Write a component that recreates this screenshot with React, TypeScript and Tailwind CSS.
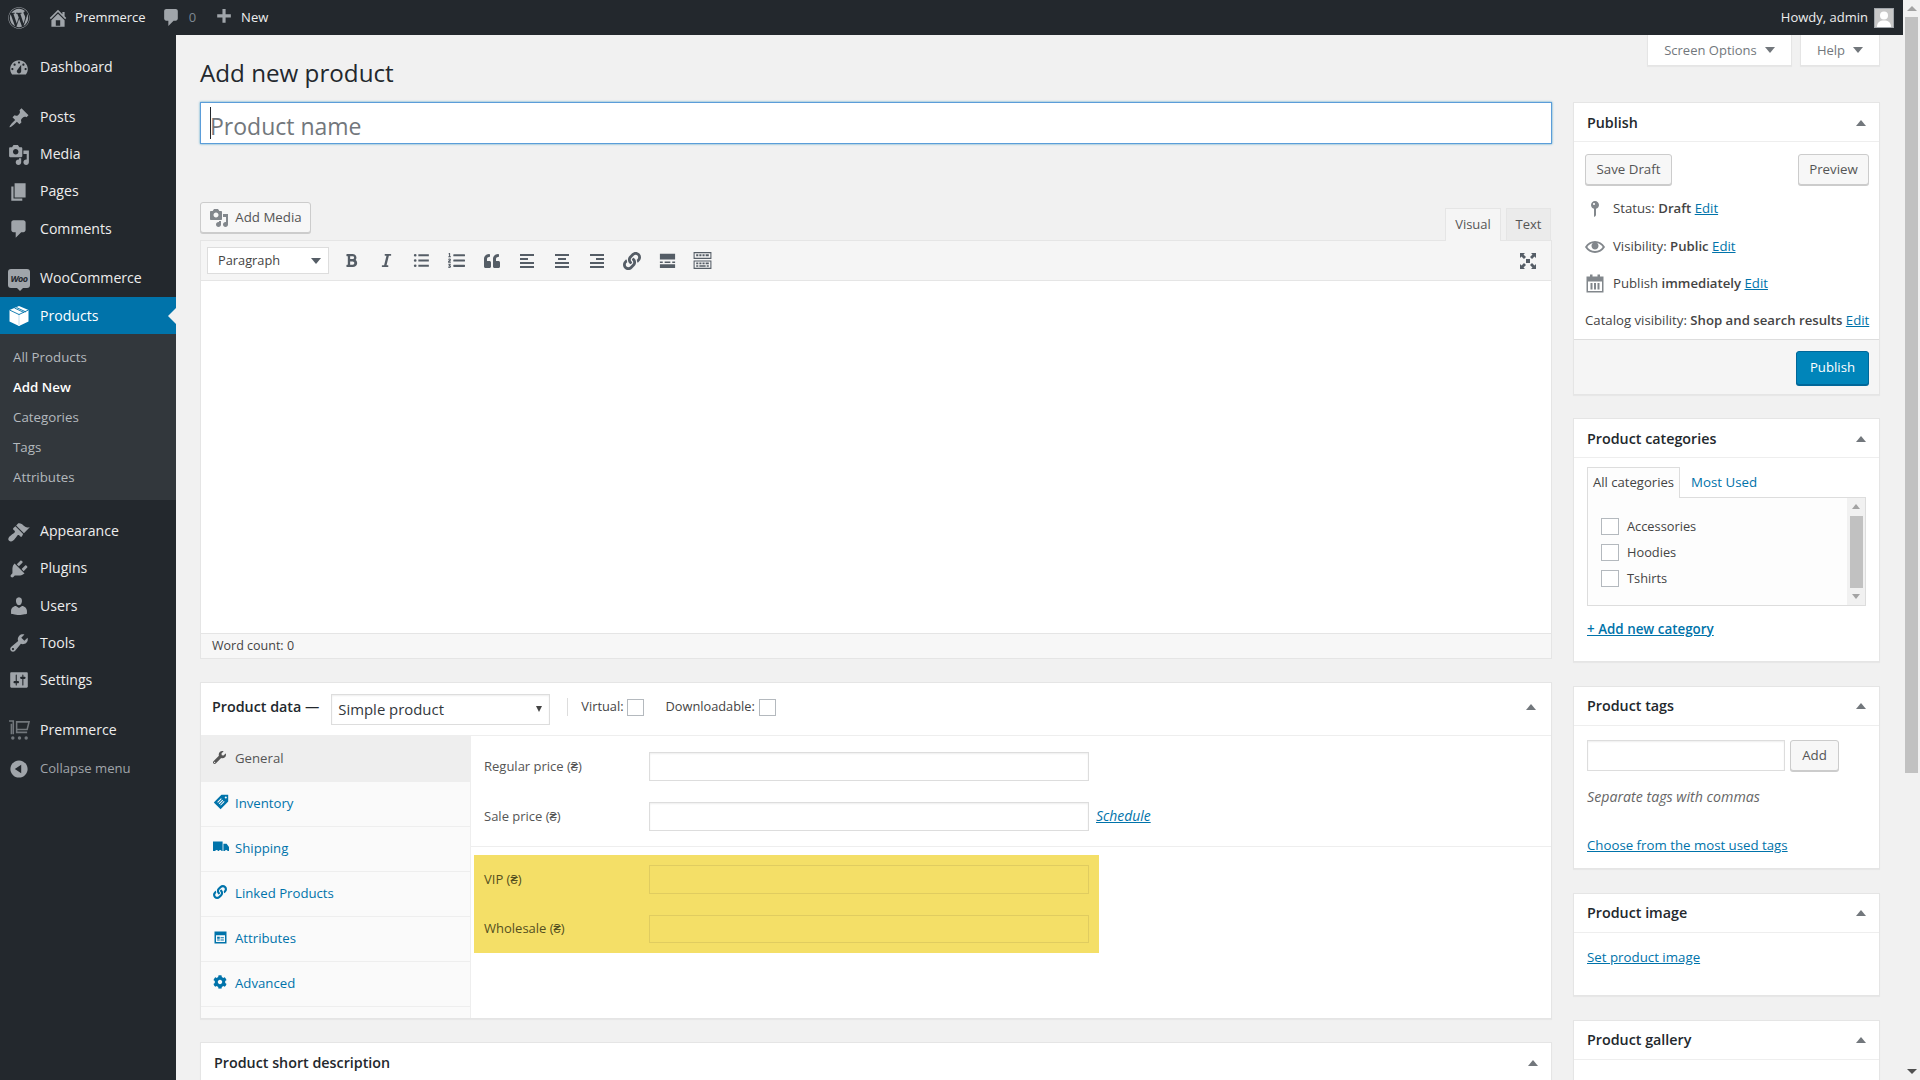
import React from "react";
import { FaWordpress, FaBold, FaItalic, FaListOl, FaQuoteLeft, FaLink, FaCog, FaWrench } from "react-icons/fa";

const P: Record<string, string> = {
  home: "M16 8.5l1.53 1.53-1.06 1.06L10 4.62l-6.47 6.47-1.06-1.06L10 2.5l4 4v-2h2v4zm-6-2.46l6 5.99V18H4v-5.97zM12 17v-5H8v5h4z",
  comment: "M5 2h9c1.1 0 2 .9 2 2v7c0 1.1-.9 2-2 2h-2l-5 5v-5H5c-1.1 0-2-.9-2-2V4c0-1.1.9-2 2-2z",
  plus: "M17 7v3h-5v5H9v-5H4V7h5V2h3v5h5z",
  dashboard: "M3.76 16h12.48c1.1-1.37 1.76-3.11 1.76-5 0-4.42-3.58-8-8-8s-8 3.58-8 8c0 1.89.66 3.63 1.76 5zM10 4c.55 0 1 .45 1 1s-.45 1-1 1-1-.45-1-1 .45-1 1-1zM6 6c.55 0 1 .45 1 1s-.45 1-1 1-1-.45-1-1 .45-1 1-1zm8 0c.55 0 1 .45 1 1s-.45 1-1 1-1-.45-1-1 .45-1 1-1zm-5.37 5.55L12 7v6c0 1.1-.9 2-2 2s-2-.9-2-2c0-.57.24-1.08.63-1.45zM4 10c.55 0 1 .45 1 1s-.45 1-1 1-1-.45-1-1 .45-1 1-1zm12 0c.55 0 1 .45 1 1s-.45 1-1 1-1-.45-1-1 .45-1 1-1z",
  post: "M10.44 3.02l1.82-1.82 6.36 6.35-1.83 1.82c-1.05-.68-2.48-.57-3.41.36l-.75.75c-.92.93-1.04 2.35-.35 3.41l-1.83 1.82-2.41-2.41-2.8 2.79c-.42.42-3.38 2.71-3.8 2.29s1.86-3.39 2.28-3.81l2.79-2.79L4.1 9.36l1.83-1.82c1.05.69 2.48.57 3.4-.36l.75-.75c.93-.92 1.05-2.35.36-3.41z",
  media: "M13 11V4c0-.55-.45-1-1-1h-1.67L9 1H5L3.67 3H2c-.55 0-1 .45-1 1v7c0 .55.45 1 1 1h10c.55 0 1-.45 1-1zM7 4.5c1.38 0 2.5 1.12 2.5 2.5S8.38 9.5 7 9.5 4.5 8.38 4.5 7 5.62 4.5 7 4.5zM14 6h5v10.5c0 1.38-1.12 2.5-2.5 2.5S14 17.88 14 16.5s1.12-2.5 2.5-2.5c.17 0 .34.02.5.05V9h-3V6zm-4 8.05V13h2v3.5c0 1.38-1.12 2.5-2.5 2.5S7 17.88 7 16.5 8.12 14 9.5 14c.17 0 .34.02.5.05z",
  page: "M6 15V2h10v13H6zm-1 1h8v2H3V5h2v11z",
  appearance: "M14.48 11.06L7.41 3.99l1.5-1.5c.5-.56 2.3-.47 3.51.32 1.21.8 1.43 1.28 2.91 2.1 1.18.64 2.45 1.26 4.45.85zm-.71.71L6.7 4.7 4.93 6.47c-.39.39-.39 1.02 0 1.41l1.06 1.06c.39.39.39 1.03 0 1.42-.6.6-1.43 1.11-2.21 1.69-.35.26-.7.53-1.01.84C1.43 13.71-.96 16.07.97 18c1.94 1.93 4.3-.45 5.28-1.8.23-.3.5-.65.79-.99.58-.78 1.09-1.61 1.69-2.21.39-.39 1.03-.39 1.42 0l1.06 1.06c.39.39 1.02.39 1.41 0z",
  plugins: "M13.11 4.36L9.87 7.6 8 5.73l3.24-3.24c.35-.34 1.05-.2 1.56.32.52.51.66 1.21.31 1.55zm-8 1.77l.91-1.12 9.01 9.01-1.19.84c-.71.71-2.63 1.16-3.82 1.16H6.14L4.9 17.26c-.59.59-1.54.59-2.12 0-.59-.58-.59-1.53 0-2.12l1.24-1.24v-3.88c0-1.13.4-3.19 1.09-3.89zm7.26 3.97l3.24-3.24c.34-.35 1.04-.21 1.55.31.52.51.66 1.21.31 1.55l-3.24 3.25z",
  users: "M10 9.25c-2.27 0-2.73-3.44-2.73-3.44C7 4.02 7.82 2 9.97 2c2.16 0 2.98 2.02 2.71 3.81 0 0-.41 3.44-2.68 3.44zm0 2.57L12.72 10c2.39 0 4.52 2.33 4.52 4.53v2.49s-3.65 1.13-7.24 1.13c-3.65 0-7.24-1.13-7.24-1.13v-2.49c0-2.25 1.94-4.48 4.47-4.48z",
  tools: "M16.68 9.77c-1.34 1.34-3.3 1.67-4.95.99l-5.41 6.52c-.99.99-2.59.99-3.58 0s-.99-2.59 0-3.57l6.52-5.42c-.68-1.65-.35-3.61.99-4.95 1.28-1.28 3.12-1.62 4.72-1.06l-2.89 2.89 2.82 2.82 2.86-2.87c.53 1.58.18 3.39-1.08 4.65zM3.81 16.21c.4.39 1.04.39 1.43 0 .4-.4.4-1.04 0-1.43-.39-.4-1.03-.4-1.43 0-.39.39-.39 1.03 0 1.43z",
  settings: "M18 16V4c0-.55-.45-1-1-1H3c-.55 0-1 .45-1 1v12c0 .55.45 1 1 1h14c.55 0 1-.45 1-1zM8 11h1c.55 0 1 .45 1 1s-.45 1-1 1H8v1.5c0 .28-.22.5-.5.5s-.5-.22-.5-.5V13H6c-.55 0-1-.45-1-1s.45-1 1-1h1V5.5c0-.28.22-.5.5-.5s.5.22.5.5V11zm5-2h-1c-.55 0-1-.45-1-1s.45-1 1-1h1V5.5c0-.28.22-.5.5-.5s.5.22.5.5V7h1c.55 0 1 .45 1 1s-.45 1-1 1h-1v5.5c0 .28-.22.5-.5.5s-.5-.22-.5-.5V9z",
  collapse: "M10 2.16c4.33 0 7.84 3.51 7.84 7.84s-3.51 7.84-7.84 7.84S2.16 14.33 2.16 10 5.71 2.16 10 2.16zm2 11.72V6.12L6.18 9.97z",
  pin: "M14 6c0 1.86-1.28 3.41-3 3.86V16c0 1-2 2-2 2V9.86c-1.72-.45-3-2-3-3.86 0-2.21 1.79-4 4-4s4 1.79 4 4zM8 5c0 .55.45 1 1 1s1-.45 1-1-.45-1-1-1-1 .45-1 1z",
  eye: "M19.7 9.4C17.7 6 14 3.9 10 3.9S2.3 6 .3 9.4L0 10l.3.6c2 3.4 5.7 5.5 9.7 5.5s7.7-2.1 9.7-5.5l.3-.6-.3-.6zM10 14.1c-3.1 0-6-1.6-7.7-4.1C3.6 8 5.7 6.6 8 6.1c-.9.6-1.5 1.7-1.5 2.9 0 1.9 1.6 3.5 3.5 3.5s3.5-1.6 3.5-3.5c0-1.2-.6-2.3-1.5-2.9 2.3.5 4.4 1.9 5.7 3.9-1.7 2.5-4.6 4.1-7.7 4.1z",
  calendar: "M1.5 3h3.5V1h2.5v2h5V1H15v2h3.5v16h-17V3zm1.5 5v9.5h14V8H3zm2.5 1.5h2v6.5h-2V9.5zm3.5 0h2v6.5H9V9.5zm3.5 0h2v6.5h-2V9.5z",
  fullscreen: "M8 8h4v4H8V8zM2 2h5L5.5 3.5 8 6 6 8 3.5 5.5 2 7V2zm16 0v5l-1.5-1.5L14 8l-2-2 2.5-2.5L13 2h5zM2 18v-5l1.5 1.5L6 12l2 2-2.5 2.5L7 18H2zm16 0h-5l1.5-1.5L12 14l2-2 2.5 2.5L18 13v5z",
  alignLeft: "M3 3h14v2H3V3zm0 4h8v2H3V7zm0 4h14v2H3v-2zm0 4h14v2H3v-2z",
  alignCenter: "M3 3h14v2H3V3zm3 4h8v2H6V7zm-3 4h14v2H3v-2zm0 4h14v2H3v-2z",
  alignRight: "M3 3h14v2H3V3zm6 4h8v2H9V7zm-6 4h14v2H3v-2zm0 4h14v2H3v-2z",
  ul: "M7 4h10v2H7V4zm0 5h10v2H7V9zm0 5h10v2H7v-2zM4 3.7a1.3 1.3 0 110 2.6 1.3 1.3 0 010-2.6zm0 5a1.3 1.3 0 110 2.6 1.3 1.3 0 010-2.6zm0 5a1.3 1.3 0 110 2.6 1.3 1.3 0 010-2.6z",
  more: "M2 3h16v6H2V3zm0 8h3v1.5H2V11zm5 0h6v1.5H7V11zm8 0h3v1.5h-3V11zM2 14h16v4H2v-4z",
  sink: "M1.5 2h17v6.5h-17V2zm1 1v4.5h15V3h-15zM4 4h2v2H4V4zm3 0h2v2H7V4zm3 0h2v2h-2V4zm3 0h3v2h-3V4zM1.5 10h17v8h-17v-8zm1 1v6h15v-6h-15zM4 12h2v1.5H4V12zm3 0h2v1.5H7V12zm3 0h2v1.5h-2V12zm3 0h3v1.5h-3V12zm-9 2.5h2V16H4v-1.5zm3 0h6V16H7v-1.5zm7 0h2V16h-2v-1.5z",
  tag: "M10.5 1h8.5v8.5L9.5 19 1 10.5 10.5 1zm5.5 2a1.3 1.3 0 100 2.6 1.3 1.3 0 000-2.6zM10 5.3L5.3 10l.9.9L10.9 6.2l-.9-.9zm1.8 1.8L7.1 11.8l.9.9 4.7-4.7-.9-.9zm1.8 1.8l-4.7 4.7.9.9 4.7-4.7-.9-.9z",
  truck: "M0 3h12v12h-1.2a2 2 0 00-3.6 0H6.3a2 2 0 00-3.6 0H0V3zm13 3h4l3 4v5h-1.7a2 2 0 00-3.6 0H13V6z",
  window: "M2 2h16v16H2V2zm2 5v9h12V7H4zm1.5 2H9v2.5H5.5V9zm0 3.5H9V14H5.5v-1.5zM10 9.5h4.5V11H10V9.5zm0 3h4.5V14H10v-1.5z",
};

function D({ n, s = 20, c = "" }: { n: string; s?: number; c?: string }) {
  return (
    <svg viewBox="0 0 20 20" width={s} height={s} fill="currentColor" fillRule="evenodd" className={c}>
      <path d={P[n]} />
    </svg>
  );
}

function Cart() {
  return (
    <svg viewBox="0 0 22 22" width="21" height="21" fill="none" stroke="#72777c" strokeWidth="1.6">
      <path d="M0 2h4.5v14M2.5 5v11" />
      <path d="M8 3h13l-2 8H8zM8 5v9h11" />
      <circle cx="4" cy="20" r="1" fill="#72777c" />
      <circle cx="11" cy="20" r="1" fill="#72777c" />
      <circle cx="18" cy="20" r="1" fill="#72777c" />
    </svg>
  );
}

function Cube() {
  return (
    <svg viewBox="0 0 22 22" width="22" height="22">
      <path d="M11 1l9.5 4v11.5L11 21l-9.5-4.5V5z" fill="#ffffff" />
      <path d="M1.5 5L11 9.5 20.5 5M11 9.5V21M6.5 3L16 7.5M8.5 2.5l9.5 4.5" fill="none" stroke="#0073aa" strokeWidth="0.9" />
      <path d="M11 10v11" stroke="#ffffff" strokeWidth="1.5" />
    </svg>
  );
}

function Woo() {
  return (
    <span className="relative flex h-[19px] w-[22px] items-center justify-center rounded-[3px] bg-[#a0a5aa] text-[9px] font-bold italic leading-none tracking-[-0.5px] text-[#23282d]">
      Woo
      <span className="absolute -bottom-[3px] left-[9px] h-0 w-0 border-x-[3px] border-t-[3px] border-x-transparent border-t-[#a0a5aa]" />
    </span>
  );
}

function MenuItem({ icon, label, mt = "", active = false, up = false }: { icon: React.ReactNode; label: string; mt?: string; active?: boolean; up?: boolean }) {
  return (
    <div className={`relative flex h-[37px] items-center ${mt} ${active ? "bg-[#0073aa] text-white" : "text-[#eeeeee]"}`}>
      <span className={`flex w-[40px] justify-center pr-[2px] ${active ? "text-white" : "text-[#a0a5aa]"}`}>{icon}</span>
      <span className={up ? "mb-[2px]" : ""}>{label}</span>
      {active && <span className="absolute right-0 top-[11px] h-0 w-0 border-y-[8px] border-r-[8px] border-y-transparent border-r-[#f1f1f1]" />}
    </div>
  );
}

function Sidebar() {
  return (
    <aside className="w-[176px] shrink-0 bg-[#23282d] pt-[14px] text-[14.1px]">
      <MenuItem up icon={<D n="dashboard" s={22} />} label="Dashboard" />
      <MenuItem up mt="mt-[13px]" icon={<D n="post" s={22} />} label="Posts" />
      <MenuItem up icon={<D n="media" s={22} />} label="Media" />
      <MenuItem up icon={<D n="page" s={22} />} label="Pages" />
      <MenuItem icon={<D n="comment" s={22} />} label="Comments" />
      <MenuItem up mt="mt-[13px]" icon={<Woo />} label="WooCommerce" />
      <MenuItem active icon={<Cube />} label="Products" />
      <div className="bg-[#32373c] pb-[7px] pl-[13px] pt-[9px] text-[13.3px] text-[#b4b9be]">
        <div className="flex h-[30px] items-center">All Products</div>
        <div className="flex h-[30px] items-center font-semibold text-white">Add New</div>
        <div className="flex h-[30px] items-center">Categories</div>
        <div className="flex h-[30px] items-center">Tags</div>
        <div className="flex h-[30px] items-center">Attributes</div>
      </div>
      <MenuItem up mt="mt-[13px]" icon={<D n="appearance" s={22} />} label="Appearance" />
      <MenuItem up icon={<D n="plugins" s={22} />} label="Plugins" />
      <MenuItem icon={<D n="users" s={22} />} label="Users" />
      <MenuItem icon={<D n="tools" s={22} />} label="Tools" />
      <MenuItem icon={<D n="settings" s={22} />} label="Settings" />
      <MenuItem mt="mt-[13px]" icon={<Cart />} label="Premmerce" />
      <div className="mt-[2px] flex h-[37px] items-center text-[13.1px] text-[#a0a5aa]">
        <span className="flex w-[40px] justify-center pr-[2px]"><D n="collapse" s={22} /></span>
        <span>Collapse menu</span>
      </div>
    </aside>
  );
}

function TopBar() {
  return (
    <header className="flex h-[35px] shrink-0 items-center bg-[#23282d] text-[13px] text-[#eeeeee]">
      <span className="ml-[8px] text-[#a0a5aa]"><FaWordpress size={22} /></span>
      <span className="ml-[17px] text-[#a0a5aa]"><D n="home" s={22} /></span>
      <span className="ml-[6px] mt-px">Premmerce</span>
      <span className="ml-[15px] text-[#a0a5aa]"><D n="comment" s={21} /></span>
      <span className="ml-[7px] mt-px text-[#7e8993]">0</span>
      <span className="ml-[17px] text-[#a0a5aa]"><D n="plus" s={21} /></span>
      <span className="ml-[7px] mt-px">New</span>
      <span className="ml-auto mt-px">Howdy, admin</span>
      <span className="ml-[6px] mr-[9px] flex h-[20px] w-[20px] items-end justify-center border border-[#a0a5aa] bg-[#c8c8c8] text-white">
        <svg viewBox="0 0 18 18" width="18" height="18" fill="currentColor"><circle cx="9" cy="6.5" r="4" /><path d="M2 18c0-5 3-6.5 7-6.5s7 1.5 7 6.5z" /></svg>
      </span>
    </header>
  );
}

function Box({ title, children, className = "", flat = false }: { title: string; children?: React.ReactNode; className?: string; flat?: boolean }) {
  return (
    <section className={`border border-[#e5e5e5] bg-white shadow-[0_1px_1px_rgba(0,0,0,0.04)] ${className}`}>
      <div className={`flex h-[39px] items-center justify-between border-b border-[#eeeeee] px-[13px] ${flat ? "" : "pt-[1px]"}`}>
        <h2 className="text-[14.3px] font-semibold text-[#23282d]">{title}</h2>
        <Arrow />
      </div>
      {children}
    </section>
  );
}

function Arrow() {
  return <span className="block h-0 w-0 border-x-[5px] border-b-[6px] border-x-transparent border-b-[#72777c]" />;
}

function DownTri({ c = "border-t-[#72777c]" }: { c?: string }) {
  return <span className={`h-0 w-0 border-x-[5px] border-t-[6px] border-x-transparent ${c}`} />;
}

function Btn({ children, className = "" }: { children: React.ReactNode; className?: string }) {
  return (
    <button className={`flex items-center justify-center rounded-[3px] border border-[#cccccc] bg-[#f7f7f7] text-[13.3px] text-[#555555] shadow-[0_1px_0_#cccccc] ${className}`}>
      {children}
    </button>
  );
}

function A({ children, className = "" }: { children: React.ReactNode; className?: string }) {
  return <a className={`text-[#0073aa] underline ${className}`}>{children}</a>;
}

function Check({ className = "" }: { className?: string }) {
  return <input type="checkbox" className={`h-[17px] w-[17px] appearance-none border border-[#b4b9be] bg-white ${className}`} />;
}

function PublishBox() {
  const row = "flex h-[37px] items-center whitespace-nowrap";
  const icon = "flex w-[28px] justify-center pr-[8px] text-[#82878c]";
  return (
    <Box title="Publish">
      <div className="h-[197px] pl-[11px] pr-[10px] pt-[12px] text-[13.2px] text-[#444444]">
        <div className="flex justify-between">
          <Btn className="h-[31px] w-[87px]">Save Draft</Btn>
          <Btn className="h-[31px] w-[71px]">Preview</Btn>
        </div>
        <div className="mt-[5px]">
          <div className={row}><span className={icon}><D n="pin" s={22} /></span><span>Status: <b className="font-semibold">Draft</b> <A>Edit</A></span></div>
          <div className={`${row} mt-px`}><span className={icon}><D n="eye" s={20} /></span><span>Visibility: <b className="font-semibold">Public</b> <A>Edit</A></span></div>
          <div className={row}><span className={icon}><D n="calendar" s={21} /></span><span>Publish <b className="font-semibold">immediately</b> <A>Edit</A></span></div>
          <div className={row}><span>Catalog visibility: <b className="font-semibold">Shop and search results</b> <A>Edit</A></span></div>
        </div>
      </div>
      <div className="flex h-[55px] items-start justify-end border-t border-[#dddddd] bg-[#f5f5f5] pl-[11px] pr-[10px] pt-[11px]">
        <button className="h-[34px] w-[73px] rounded-[3px] border border-[#006799] bg-[#0085ba] text-[13.2px] text-white shadow-[0_1px_0_#006799]">Publish</button>
      </div>
    </Box>
  );
}

function CategoriesBox() {
  return (
    <Box title="Product categories" className="mt-[23px]">
      <div className="h-[203px] px-[13px] pt-[9px] text-[13.3px] text-[#444444]">
        <div className="flex h-[31px]">
          <span className="flex h-[31px] w-[93px] items-center justify-center border border-b-0 border-[#dddddd] bg-[#fdfdfd] text-[13.1px]">All categories</span>
          <span className="ml-[11px] flex items-center text-[#0073aa]">Most Used</span>
        </div>
        <div className="-mt-px flex h-[109px] border border-[#dddddd] bg-[#fdfdfd]">
          <div className="flex-1 pl-[13px] pt-[15px]">
            {["Accessories", "Hoodies", "Tshirts"].map((c) => (
              <label key={c} className="flex h-[26px] items-center text-[12.8px]">
                <Check className="mr-[8px] h-[17px] w-[18px]" />
                <span className="mt-[2px]">{c}</span>
              </label>
            ))}
          </div>
          <div className="flex w-[18px] flex-col items-center bg-[#f1f1f1] py-[6px]">
            <span className="h-0 w-0 border-x-[4px] border-b-[5px] border-x-transparent border-b-[#a3a3a3]" />
            <span className="mt-[7px] h-[72px] w-[13px] bg-[#c1c1c1]" />
            <span className="mt-[6px] h-0 w-0 border-x-[4px] border-t-[5px] border-x-transparent border-t-[#a3a3a3]" />
          </div>
        </div>
        <div className="mt-[13px] text-[13.4px]"><A className="font-semibold">+ Add new category</A></div>
      </div>
    </Box>
  );
}

function TagsBox() {
  return (
    <Box flat title="Product tags" className="mt-[24px]">
      <div className="h-[142px] px-[13px] pt-[14px] text-[13.25px] text-[#444444]">
        <div className="flex">
          <input className="h-[31px] w-[198px] border border-[#dddddd] bg-white shadow-[inset_0_1px_2px_rgba(0,0,0,0.07)]" />
          <Btn className="ml-[5px] h-[31px] w-[49px]">Add</Btn>
        </div>
        <p className="mt-[15px] text-[14.2px] italic text-[#666666]">Separate tags with commas</p>
        <p className="mt-[29px]"><A>Choose from the most used tags</A></p>
      </div>
    </Box>
  );
}

function PriceRow({ label, yellow = false, short = false, extra, className = "" }: { label: string; yellow?: boolean; short?: boolean; extra?: React.ReactNode; className?: string }) {
  return (
    <div className={`flex items-center text-[13px] ${yellow ? "text-[#55501f]" : "text-[#555555]"} ${className}`}>
      <label className="w-[165px]">{label}</label>
      <input className={`w-[440px] border ${short ? "h-[28px]" : "h-[29px]"} ${yellow ? "border-[#e0cc60] bg-[#f4df67]" : "border-[#dddddd] bg-white shadow-[inset_0_1px_2px_rgba(0,0,0,0.07)]"}`} />
      {extra}
    </div>
  );
}

function ProductData() {
  const tabs: [React.ReactNode, string][] = [
    [<D n="tag" s={16} />, "Inventory"],
    [<D n="truck" s={16} />, "Shipping"],
    [<FaLink size={14} />, "Linked Products"],
    [<D n="window" s={15} />, "Attributes"],
    [<FaCog size={14} />, "Advanced"],
  ];
  return (
    <section className="mt-[23px] border border-[#e5e5e5] bg-white shadow-[0_1px_1px_rgba(0,0,0,0.04)]">
      <div className="flex h-[53px] items-center border-b border-[#eeeeee] pb-[4px] pl-[11px] pr-[15px] text-[12.8px] text-[#444444]">
        <span className="text-[14.3px] font-semibold text-[#23282d]">Product data —</span>
        <span className="ml-[12px] flex h-[31px] w-[219px] translate-y-[2px] items-center justify-between border border-[#dddddd] pl-[6px] pr-[7px] text-[14.9px] text-[#32373c] shadow-[inset_0_1px_2px_rgba(0,0,0,0.07)]">
          Simple product
          <span className="h-0 w-0 border-x-[3.5px] border-t-[6px] border-x-transparent border-t-[#444444]" />
        </span>
        <span className="ml-[17px] h-[18px] border-l border-[#dddddd]" />
        <span className="ml-[13px]">Virtual:</span>
        <Check className="ml-[3px]" />
        <span className="ml-[22px]">Downloadable:</span>
        <Check className="ml-[4px]" />
        <span className="ml-auto"><Arrow /></span>
      </div>
      <div className="flex h-[282px]">
        <nav className="w-[270px] shrink-0 border-r border-[#eeeeee] bg-[#fafafa] text-[13.2px]">
          <div className="flex h-[46px] items-center bg-[#eeeeee] pl-[12px] text-[#555555]">
            <span className="flex w-[22px] -translate-y-[2px]"><FaWrench size={13} /></span>
            General
          </div>
          {tabs.map(([ic, t]) => (
            <div key={t} className="flex h-[45px] items-center border-b border-[#eeeeee] pl-[12px] text-[#0073aa]">
              <span className="flex w-[22px] -translate-y-[2px]">{ic}</span>
              {t}
            </div>
          ))}
        </nav>
        <div className="flex-1">
          <div className="h-[111px] border-b border-[#eeeeee] pl-[13px] pt-[16px]">
            <PriceRow label="Regular price (₴)" />
            <PriceRow
              label="Sale price (₴)"
              className="mt-[21px]"
              extra={<A className="ml-[7px] text-[13.9px] italic">Schedule</A>}
            />
          </div>
          <div className="ml-[3px] mt-[8px] w-[625px] bg-[#f4df67] pb-[10px] pl-[10px] pt-[10px]">
            <PriceRow yellow label="VIP (₴)" />
            <PriceRow yellow short label="Wholesale (₴)" className="mt-[21px]" />
          </div>
        </div>
      </div>
    </section>
  );
}

function Editor() {
  const tool = "flex h-[35px] w-[35.1px] items-center justify-center text-[#555d66]";
  return (
    <div className="border border-[#e5e5e5] bg-white">
      <div className="flex h-[40px] items-center border-b border-[#e5e5e5] bg-[#f5f5f5] pl-[6px]">
        <span className="mr-[5px] flex h-[27px] w-[122px] items-center justify-between border border-[#dddddd] bg-white pl-[10px] pr-[7px] text-[12.8px] text-[#444444]">
          Paragraph
          <DownTri c="border-t-[#555d66]" />
        </span>
        <span className={tool}><FaBold size={15} /></span>
        <span className={tool}><FaItalic size={15} /></span>
        <span className={tool}><D n="ul" s={21} /></span>
        <span className={tool}><FaListOl size={17} /></span>
        <span className={tool}><FaQuoteLeft size={16} /></span>
        <span className={tool}><D n="alignLeft" s={20} /></span>
        <span className={tool}><D n="alignCenter" s={20} /></span>
        <span className={tool}><D n="alignRight" s={20} /></span>
        <span className={tool}><FaLink size={18} /></span>
        <span className={tool}><D n="more" s={19} /></span>
        <span className={tool}><D n="sink" s={21} /></span>
        <span className={`${tool} ml-auto mr-[5px]`}><D n="fullscreen" s={20} /></span>
      </div>
      <div className="h-[352px] bg-white" />
      <div className="flex h-[25px] items-center border-t border-[#e5e5e5] bg-[#f7f7f7] pl-[11px] text-[12.5px] text-[#444444]">Word count: 0</div>
    </div>
  );
}

function LeftColumn() {
  return (
    <div className="w-[1352px] shrink-0">
      <div className="relative">
        <input
          placeholder="Product name"
          className="h-[42px] w-full border border-[#5b9dd9] bg-white pl-[9px] pt-[6px] text-[23px] text-[#32373c] shadow-[0_0_2px_rgba(30,140,190,0.8)] outline-none placeholder:text-[#72777c]"
        />
        <span className="absolute left-[10px] top-[5px] h-[32px] w-px bg-[#23282d]" />
      </div>
      <div className="mt-[58px] flex h-[38px] items-start justify-between">
        <Btn className="h-[31px] w-[111px] gap-[6px]">
          <span className="text-[#82878c]"><D n="media" s={20} /></span>
          Add Media
        </Btn>
        <div className="mr-px flex h-[32px] self-end text-[13px] text-[#555555]">
          <span className="-mb-px flex w-[56px] items-center justify-center border border-b-0 border-[#e5e5e5] bg-[#f5f5f5]">Visual</span>
          <span className="ml-[5px] flex w-[45px] items-center justify-center border border-b-0 border-[#e5e5e5] bg-[#ebebeb]">Text</span>
        </div>
      </div>
      <Editor />
      <ProductData />
      <Box title="Product short description" className="mt-[23px]">
        <div className="h-[42px]" />
      </Box>
    </div>
  );
}

function RightColumn() {
  return (
    <div className="ml-[21px] w-[307px] shrink-0">
      <PublishBox />
      <CategoriesBox />
      <TagsBox />
      <Box flat title="Product image" className="mt-[24px]">
        <div className="h-[62px] px-[13px] pt-[15px] text-[13.3px]"><A>Set product image</A></div>
      </Box>
      <Box flat title="Product gallery" className="mt-[24px]">
        <div className="h-[40px]" />
      </Box>
    </div>
  );
}

function Scrollbar() {
  return (
    <div className="flex w-[17px] shrink-0 flex-col items-center bg-[#f1f1f1]">
      <span className="mt-[6px] h-0 w-0 border-x-[5px] border-b-[5px] border-x-transparent border-b-[#a3a3a3]" />
      <span className="mt-[6px] h-[756px] w-[13px] bg-[#c1c1c1]" />
      <span className="mt-auto mb-[6px] h-0 w-0 border-x-[5px] border-t-[5px] border-x-transparent border-t-[#505050]" />
    </div>
  );
}

export default function App() {
  return (
    <div className="flex h-[1080px] w-[1920px] overflow-hidden bg-[#f1f1f1] font-['Open_Sans','Liberation_Sans',sans-serif] text-[14.3px] text-[#444444]">
      <div className="flex w-[1903px] flex-col">
        <TopBar />
        <div className="flex min-h-0 flex-1">
          <Sidebar />
          <main className="min-w-0 flex-1 overflow-hidden pl-[24px]">
            <div className="flex h-[67px] items-start justify-between pr-[23px]">
              <h1 className="mt-[24px] text-[24.2px] leading-[28px] text-[#23282d]">Add new product</h1>
              <div className="flex gap-[8px] text-[13px] text-[#72777c]">
                <span className="flex h-[31px] w-[145px] items-center justify-center gap-[8px] border border-t-0 border-[#e5e5e5] bg-white shadow-[0_1px_1px_rgba(0,0,0,0.04)]"><span className="mt-[2px]">Screen Options</span> <DownTri /></span>
                <span className="flex h-[31px] w-[80px] items-center justify-center gap-[8px] border border-t-0 border-[#e5e5e5] bg-white shadow-[0_1px_1px_rgba(0,0,0,0.04)]"><span className="mt-[2px]">Help</span> <DownTri /></span>
              </div>
            </div>
            <div className="flex items-start">
              <LeftColumn />
              <RightColumn />
            </div>
          </main>
        </div>
      </div>
      <Scrollbar />
    </div>
  );
}
